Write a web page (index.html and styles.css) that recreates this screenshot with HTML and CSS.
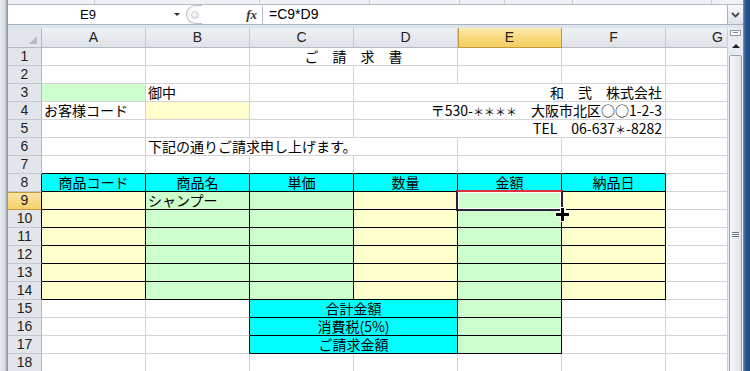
FILE: index.html
```html
<!DOCTYPE html>
<html lang="ja">
<head>
    <meta charset="UTF-8">
    <meta name="viewport" content="width=device-width, initial-scale=1.0">
    <title>ご請求書 - Excel</title>
    <link rel="stylesheet" href="styles.css">
</head>
<body>

<div class="edge-l"></div>

<div class="main">
    <div class="ribbon-foot">
        <span style="width:87px"></span><span style="width:165px"></span><span style="width:110px"></span><span style="width:90px"></span><span style="width:45px"></span><span style="width:68px"></span><span style="width:139px"></span>
    </div>

    <div class="fbar">
        <div class="namebox">E9</div>
        <div class="namedrop"><i class="tri-down"></i></div>
        <div class="fxzone">
            <div class="knob"><i></i></div>
            <span class="fx">fx</span>
        </div>
        <div class="formula">=C9*D9</div>
        <div class="expand">
            <svg width="9" height="6" viewBox="0 0 9 6"><path d="M1 1l3.5 3.5L8 1" fill="none" stroke="#4a4a4a" stroke-width="1.8"/></svg>
        </div>
    </div>
    <div class="gap"></div>

    <div class="work">
        <div class="sheet">
            <!-- column headers -->
            <div class="corner"></div>
            <div class="ch">A</div><div class="ch">B</div><div class="ch">C</div><div class="ch">D</div>
            <div class="ch on">E</div><div class="ch">F</div><div class="ch g">G</div>

            <!-- 1 -->
            <div class="rh">1</div>
            <div class="c"></div><div class="c"></div>
            <div class="c s2 mid">ご　請　求　書</div>
            <div class="c"></div><div class="c"></div><div class="c g"></div>
            <!-- 2 -->
            <div class="rh">2</div>
            <div class="c"></div><div class="c"></div><div class="c"></div><div class="c"></div><div class="c"></div><div class="c"></div><div class="c g"></div>
            <!-- 3 -->
            <div class="rh">3</div>
            <div class="c gr"></div><div class="c">御中</div><div class="c"></div>
            <div class="c s3 rt">和　弐　株式会社</div>
            <div class="c g"></div>
            <!-- 4 -->
            <div class="rh">4</div>
            <div class="c">お客様コード</div><div class="c yl"></div><div class="c"></div>
            <div class="c s3 rt">〒530-<span class="ast">＊＊＊＊</span>　大阪市北区○○1-2-3</div>
            <div class="c g"></div>
            <!-- 5 -->
            <div class="rh">5</div>
            <div class="c"></div><div class="c"></div><div class="c"></div>
            <div class="c s3 rt">TEL　06-637<span class="ast">＊</span>-8282</div>
            <div class="c g"></div>
            <!-- 6 -->
            <div class="rh">6</div>
            <div class="c"></div>
            <div class="c s3">下記の通りご請求申し上げます。</div>
            <div class="c"></div><div class="c"></div><div class="c g"></div>
            <!-- 7 -->
            <div class="rh">7</div>
            <div class="c bb"></div><div class="c bb"></div><div class="c bb"></div><div class="c bb"></div><div class="c bb"></div><div class="c bb"></div><div class="c g"></div>
            <!-- 8 -->
            <div class="rh dk">8</div>
            <div class="c cy bk mid">商品コード</div>
            <div class="c cy bk mid">商品名</div>
            <div class="c cy bk mid">単価</div>
            <div class="c cy bk mid">数量</div>
            <div class="c cy bk mid">金額</div>
            <div class="c cy bk mid">納品日</div>
            <div class="c g"></div>
            <!-- 9 -->
            <div class="rh dk on">9</div>
            <div class="c yl bk"></div><div class="c gr bk">シャンプー</div><div class="c gr bk"></div><div class="c yl bk"></div><div class="c gr bk"></div><div class="c yl bk"></div><div class="c g"></div>
            <!-- 10 -->
            <div class="rh dk">10</div>
            <div class="c yl bk"></div><div class="c gr bk"></div><div class="c gr bk"></div><div class="c yl bk"></div><div class="c gr bk"></div><div class="c yl bk"></div><div class="c g"></div>
            <!-- 11 -->
            <div class="rh dk">11</div>
            <div class="c yl bk"></div><div class="c gr bk"></div><div class="c gr bk"></div><div class="c yl bk"></div><div class="c gr bk"></div><div class="c yl bk"></div><div class="c g"></div>
            <!-- 12 -->
            <div class="rh dk">12</div>
            <div class="c yl bk"></div><div class="c gr bk"></div><div class="c gr bk"></div><div class="c yl bk"></div><div class="c gr bk"></div><div class="c yl bk"></div><div class="c g"></div>
            <!-- 13 -->
            <div class="rh dk">13</div>
            <div class="c yl bk"></div><div class="c gr bk"></div><div class="c gr bk"></div><div class="c yl bk"></div><div class="c gr bk"></div><div class="c yl bk"></div><div class="c g"></div>
            <!-- 14 -->
            <div class="rh dk">14</div>
            <div class="c yl bk"></div><div class="c gr bk"></div><div class="c gr bk"></div><div class="c yl bk"></div><div class="c gr bk"></div><div class="c yl bk"></div><div class="c g"></div>
            <!-- 15 -->
            <div class="rh">15</div>
            <div class="c"></div><div class="c br"></div>
            <div class="c s2 cy bk mid">合計金額</div>
            <div class="c gr bk"></div><div class="c"></div><div class="c g"></div>
            <!-- 16 -->
            <div class="rh">16</div>
            <div class="c"></div><div class="c br"></div>
            <div class="c s2 cy bk mid">消費税(5%)</div>
            <div class="c gr bk"></div><div class="c"></div><div class="c g"></div>
            <!-- 17 -->
            <div class="rh">17</div>
            <div class="c"></div><div class="c br"></div>
            <div class="c s2 cy bk mid">ご請求金額</div>
            <div class="c gr bk"></div><div class="c"></div><div class="c g"></div>
            <!-- 18 -->
            <div class="rh">18</div>
            <div class="c"></div><div class="c"></div><div class="c"></div><div class="c"></div><div class="c"></div><div class="c"></div><div class="c g"></div>

            <!-- active cell E9 -->
            <div class="sel"><i class="handle"></i></div>
            <svg class="cursor" width="15" height="15" viewBox="0 0 15 15">
                <path d="M5 0h5v5h5v5h-5v5h-5v-5h-5v-5h5z" fill="#fff"/>
                <path d="M6 1h3v5h5v3h-5v5h-3v-5h-5v-3h5z" fill="#000"/>
            </svg>
        </div>

        <div class="vscroll">
            <div class="split"></div>
            <div class="up"><i class="tri-up"></i></div>
            <div class="thumb"><div class="grip"><i></i><i></i><i></i></div></div>
        </div>
    </div>
</div>

<div class="edge-r"></div>

</body>
</html>
```

FILE: styles.css
```css
* {
    box-sizing: border-box;
}
body {
    margin: 0;
    width: 750px;
    height: 371px;
    overflow: hidden;
    display: flex;
    font-family: "Noto Sans CJK JP", "Noto Sans", sans-serif;
    font-size: 14px;
    color: #000;
    background: #fff;
}
.edge-l {
    width: 8px;
    background: linear-gradient(to right, #e6eaee 0, #d6dce2 5px, #8f9ba7 7px);
}
.edge-r {
    width: 7px;
    background: linear-gradient(to right, #7f9cc0 0, #2d5c96 2px, #20497f 7px);
}
.main {
    width: 735px;
    height: 371px;
    display: flex;
    flex-direction: column;
}

/* ribbon bottom edge */
.ribbon-foot {
    height: 5px;
    flex-shrink: 0;
    display: flex;
    background: #eef1f5;
    border-bottom: 1px solid #b3bdc8;
}
.ribbon-foot span {
    border-right: 1px solid #c8cfd8;
}

/* formula bar */
.fbar {
    height: 20px;
    flex-shrink: 0;
    display: flex;
    background: #fff;
    border-bottom: 1px solid #a9b3be;
    font-family: "Liberation Sans", sans-serif;
}
.namebox {
    width: 160px;
    text-align: center;
    line-height: 19px;
    font-size: 13px;
}
.namedrop {
    width: 18px;
    display: flex;
    align-items: center;
    justify-content: center;
}
.tri-down {
    width: 0;
    height: 0;
    border-left: 3px solid transparent;
    border-right: 3px solid transparent;
    border-top: 3px solid #333;
}
.fxzone {
    width: 77px;
    display: flex;
    align-items: center;
    justify-content: space-between;
    padding-right: 5px;
    border-right: 1px solid #b9c1ca;
}
.knob {
    width: 16px;
    height: 19px;
    border: 1px solid #b8c0c9;
    border-right: none;
    border-radius: 10px 0 0 10px;
    display: flex;
    align-items: center;
    padding-left: 4px;
    background: linear-gradient(to right, #f4f6f8, #fff);
}
.knob i {
    width: 8px;
    height: 8px;
    border-radius: 50%;
    background: radial-gradient(circle at 40% 35%, #fff, #cfd5db);
    border: 1px solid #d3d8de;
}
.fx {
    font-family: "Liberation Serif", serif;
    font-style: italic;
    font-weight: bold;
    font-size: 13px;
    color: #333;
}
.formula {
    flex: 1;
    padding-left: 6px;
    line-height: 19px;
    font-size: 14px;
}
.expand {
    width: 16px;
    display: flex;
    align-items: center;
    justify-content: center;
    border-left: 1px solid #a9b3be;
    background: linear-gradient(#f6f8fa, #dde3ea);
}
.gap {
    height: 3px;
    flex-shrink: 0;
    background: #dfe5ec;
}

/* worksheet */
.work {
    flex: 1;
    min-height: 0;
    overflow: hidden;
    display: flex;
}
.sheet {
    width: 719px;
    flex-shrink: 0;
    display: grid;
    grid-template-columns: 34px repeat(6, 104px) 61px;
    grid-template-rows: 20px repeat(18, 18px);
    position: relative;
    overflow: hidden;
}
.corner {
    position: relative;
    background: #e2e6eb;
    border-right: 1px solid #b2bac4;
    border-bottom: 1px solid #b2bac4;
}
.corner::after {
    content: "";
    position: absolute;
    right: 4px;
    bottom: 3px;
    border-left: 8px solid transparent;
    border-bottom: 8px solid #b5bcc4;
}
.ch {
    background: linear-gradient(#eef1f4, #dfe3e8);
    border-right: 1px solid #c4c9d0;
    border-bottom: 1px solid #b2bac4;
    text-align: center;
    line-height: 19px;
    color: #222;
    font-family: "Liberation Sans", sans-serif;
}
.ch.on {
    background: linear-gradient(#fcebb0, #f8d879 55%, #f5ce60);
    border-right-color: #c6983d;
    border-bottom-color: #c6983d;
    box-shadow: inset 1px 0 0 #c6983d;
}
.ch.g {
    text-align: left;
    padding-left: 46px;
    border-right: none;
}
.rh {
    background: #e2e6eb;
    border-right: 1px solid #b2bac4;
    border-bottom: 1px solid #c4c9d0;
    text-align: center;
    line-height: 17px;
    color: #222;
    font-family: "Liberation Sans", sans-serif;
}
.rh.dk {
    border-right-color: #000;
}
.rh.on {
    background: linear-gradient(#fbe6a8, #f6d068);
    border-bottom-color: #c6983d;
    box-shadow: inset 0 1px 0 #c6983d;
}
.c {
    border-right: 1px solid #d4d4d4;
    border-bottom: 1px solid #d4d4d4;
    line-height: 17px;
    padding: 0 2px;
    white-space: nowrap;
}
.c.g {
    border-right: none;
}
.s2 {
    grid-column: span 2;
}
.s3 {
    grid-column: span 3;
}
.mid {
    text-align: center;
}
.rt {
    text-align: right;
    padding-right: 3px;
}
.ast {
    font-size: 11px;
}
.gr {
    background: #ccffcc;
}
.yl {
    background: #ffffcc;
}
.cy {
    background: #00ffff;
}
.bk {
    border-right-color: #000;
    border-bottom-color: #000;
}
.bb {
    border-bottom-color: #000;
}
.br {
    border-right-color: #000;
}

/* active cell */
.sel {
    position: absolute;
    left: 448px;
    top: 162px;
    width: 107px;
    height: 21px;
    border: 2px solid #2a1f3d;
    border-top-color: #e0303a;
    box-shadow: inset 0 0 0 1px #fff;
}
.handle {
    position: absolute;
    right: -5px;
    bottom: -5px;
    width: 6px;
    height: 6px;
    background: #000;
    border: 1px solid #fff;
}
.cursor {
    position: absolute;
    left: 547px;
    top: 179px;
}

/* vertical scrollbar */
.vscroll {
    width: 16px;
    flex-shrink: 0;
    background: #e8ecf1;
    border-left: 1px solid #c9cfd7;
    padding: 2px 1px 0;
}
.split {
    height: 6px;
    margin: 0 1px;
    border: 1px solid #8c98a5;
    background: #fff;
    position: relative;
}
.split::after {
    content: "";
    position: absolute;
    left: 2px;
    right: 2px;
    top: 1px;
    height: 1px;
    background: #7a8694;
}
.up {
    height: 15px;
    margin-top: 2px;
    display: flex;
    align-items: center;
    justify-content: center;
}
.tri-up {
    width: 0;
    height: 0;
    border-left: 4px solid transparent;
    border-right: 4px solid transparent;
    border-bottom: 4px solid #222;
}
.thumb {
    height: 400px;
    margin-top: 2px;
    border: 1px solid #98a4b1;
    border-radius: 2px;
    background: linear-gradient(to right, #f5f7f9, #dfe4ea);
    padding-top: 176px;
}
.grip {
    display: flex;
    flex-direction: column;
    align-items: center;
    gap: 1px;
}
.grip i {
    width: 7px;
    height: 1px;
    background: #6d7885;
}
```
